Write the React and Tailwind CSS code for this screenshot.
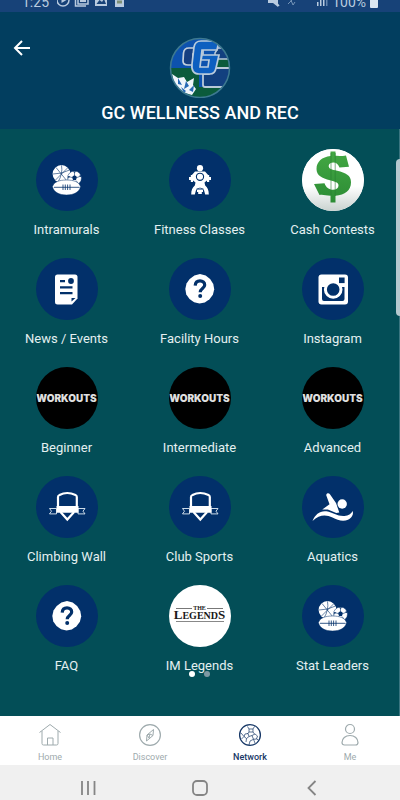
import React from "react";

function BallsIcon() {
  return (
    <svg viewBox="0 0 62 62" className="size-full" aria-hidden="true">
      <circle cx="25.5" cy="25" r="8.9" fill="#fff" />
      <circle cx="38.5" cy="29" r="7" fill="#fff" stroke="#02306a" strokeWidth="0.5" />
      <g fill="none" stroke="#02306a" strokeWidth="0.6">
        <path d="M20 18.500L31 32M32 18.500L19 31.500M25.500 16.300Q27 25 22 33M17 25Q26 25 33.500 21" />
        <path d="M38.500 26V22.500M36 28.500L32.500 27.500M41 28.500L45 27M37 31.500L35.500 34M40 31.500L42 34" />
      </g>
      <path d="M38.500 26l2.500 2-1 3h-3l-1-3zM36.500 22.400h4l-2 1.400zM44 25l1.300 3-1.800-.5zM32 27l2 .6-1.500 2.200z" fill="#02306a" />
      <path d="M16.500 37.500C18 33 23 31 30.500 31S43 33 44.500 37.500C43.500 43 38 46 30.500 46S17.500 43 16.500 37.500z" fill="#fff" stroke="#02306a" strokeWidth="0.5" />
      <path d="M18 38.300H43.500M27 35.500v5.500M29.300 35.500v5.500M31.600 35.500v5.500M34 35.500v5.500" stroke="#02306a" strokeWidth="0.8" fill="none" />
    </svg>
  );
}

function FitnessIcon() {
  return (
    <svg viewBox="0 0 62 62" className="size-full" aria-hidden="true" fill="#fff">
      <circle cx="31" cy="19.200" r="3.100" />
      <path d="M26 22.500h10l4 4.500-1.500 4-3 2.500 1 4.500h-11l1-4.500-3-2.500L22 27z" />
      <path d="M22 28.500h18v2H22zM21.800 26h2.200v7h-2.200zM38 26h2.200v7H38zM20 28h1.800v3H20zM40.200 28H42v3h-1.800z" />
      <circle cx="31" cy="27.800" r="3.600" stroke="#02306a" strokeWidth="1.100" />
      <path d="M26 36.500h10c2.500 1.500 3.800 4.500 3.800 9h-3.600l-1.400-5h-7.600l-1.400 5h-3.600c0-4.500 1.300-7.500 3.800-9z" />
      <path d="M27.500 40q3.500-1.800 7 0" stroke="#02306a" fill="none" strokeWidth="0.8" />
      <path d="M28 41h6v2h-6zM29.200 43h3.600v2h-3.600z" />
    </svg>
  );
}

function DollarIcon() {
  return (
    <svg viewBox="0 0 62 62" className="size-full" aria-hidden="true">
      <defs>
        <linearGradient id="cash" x1="0" y1="0" x2="0" y2="1">
          <stop offset="0" stopColor="#43a843" />
          <stop offset="1" stopColor="#2c8c35" />
        </linearGradient>
        <linearGradient id="floor" x1="0" y1="0" x2="0" y2="1">
          <stop offset="0.6" stopColor="#fff" />
          <stop offset="1" stopColor="#c9d2cf" />
        </linearGradient>
      </defs>
      <circle cx="31" cy="31" r="31" fill="url(#floor)" />
      <path d="M28.500 2.500h5v4.300c4.500-.1 8 .8 10.500-.2l3 11.200-9.500.6c-1.500-3.300-3.200-5-6-5-3 0-4.800 1.200-4.800 3.500 0 3 3 3.400 8.500 4.800 8.500 2.200 13.800 4.500 13.800 11.500 0 8.200-6 12.800-15.500 13.500v6.800h-5v-6.700c-5-.3-8-1.800-11-.8L12 35l10.500-.8c1.500 4.200 4.500 6.500 8.500 6.500 3.500 0 5.500-1.700 5.500-4.200 0-3.200-3.500-3.800-8.500-5.200-8-2.200-13.500-4.500-13.500-11.300 0-7.200 5.500-12 14-12.900z" fill="url(#cash)" />
      <path d="M29 4v42M33.200 4v43" stroke="#267c30" strokeWidth="0.6" />
    </svg>
  );
}

function NewsIcon() {
  return (
    <svg viewBox="0 0 62 62" className="size-full" aria-hidden="true">
      <path d="M21.500 16.500h17.500a2.500 2.500 0 0 1 2.500 2.500v21.500l-5.500 6H21.500A2.500 2.500 0 0 1 19 44V19a2.500 2.500 0 0 1 2.500-2.500z" fill="#fff" />
      <path d="M24 22h5v2.200h-5zM24 28.200h12.500v2.200H24zM24 34h12.500v2.200H24zM35.500 40h4l-4 3.500z" fill="#02306a" />
      <circle cx="35" cy="23" r="2.900" fill="#02306a" />
    </svg>
  );
}

function QuestionIcon() {
  return (
    <svg viewBox="0 0 62 62" className="size-full" aria-hidden="true">
      <path d="M31 16l5.700 1.600 4.400 3.500 3.200 4.800.9 5.300-1.300 5.500-3.400 4.600-4.700 3.200-5.300 1-5.400-1.200-4.600-3.300-3.200-4.500-1-5.400 1.200-5.500 3.200-4.700 4.700-3.300z" fill="#fff" />
      <path d="M26.200 27.600c.2-3 2-4.700 4.800-4.700s4.700 1.600 4.700 4.100c0 3.400-4.500 3.700-4.500 7.200" fill="none" stroke="#02306a" strokeWidth="3.200" />
      <circle cx="31.200" cy="38" r="2" fill="#02306a" />
    </svg>
  );
}

function CameraIcon() {
  return (
    <svg viewBox="0 0 62 62" className="size-full" aria-hidden="true">
      <rect x="16.500" y="16.500" width="29.500" height="30" rx="3" fill="#fff" />
      <path d="M20 29h3.500a8.300 8.300 0 1 0 15.700 0h3.300v12a2 2 0 0 1-2 2H22a2 2 0 0 1-2-2z" fill="#02306a" />
      <circle cx="31.200" cy="31.500" r="7.800" fill="#02306a" stroke="#fff" strokeWidth="3" />
      <rect x="37" y="19.500" width="5.600" height="5.600" fill="#02306a" />
    </svg>
  );
}

function ShieldIcon() {
  return (
    <svg viewBox="0 0 62 62" className="size-full" aria-hidden="true">
      <path d="M22 31V21q0-1.500 1.500-2Q31 15 39.500 19q1.300.5 1.300 2V31M24.500 36l6.800 7.500 6.800-7.500" fill="none" stroke="#fff" strokeWidth="2.200" />
      <path d="M20.500 32.500h-7l2 2.700-2 2.700h7zM42 32.500h7l-2 2.700 2 2.700h-7z" fill="#02306a" stroke="#e2edf5" strokeWidth="0.9" />
      <path d="M20.500 30h22v6.800h-22z" fill="#fff" />
    </svg>
  );
}

function SwimIcon() {
  return (
    <svg viewBox="0 0 62 62" className="size-full" aria-hidden="true" fill="#fff">
      <path d="M24.500 20q-.8-2 1-2.700 1.600-.3 2.600 1.300l5.900 8.400 3.300 9.500-3 .5-8.500-3.500h-5.500l7.200-5.300z" />
      <circle cx="40.200" cy="28" r="4.700" />
      <path d="M10.500 45c3-7 7.500-10.500 14-9.700 6.500 1 11 5.300 18 4.700 4-.3 6.500-2 8.200-5 1 3-.7 7-4.700 8.800-5 2-10.500.5-15.500-2.300-6-3-13-3.500-20 3.500z" />
    </svg>
  );
}

function WorkoutsBadge() {
  return (
    <span className="font-['Inter',sans-serif] text-[10px] font-black leading-4 text-[#dedede]" aria-hidden="true">
      WORKOUTS
    </span>
  );
}

function LegendsBadge() {
  return (
    <span className="flex flex-col items-center pb-1 font-['Liberation_Serif',serif] font-bold text-[#181818]" aria-hidden="true">
      <span className="flex items-center gap-px">
        <i className="h-px w-4 bg-[#777]" />
        <span className="text-[6px] leading-[5px]">THE</span>
        <i className="h-px w-4 bg-[#777]" />
      </span>
      <span className="text-[10px] leading-2">
        <span className="text-[13px]">L</span>EGEND<span className="text-[13px]">S</span>
      </span>
      <i className="mt-px h-px w-12 bg-[#888]" />
    </span>
  );
}

const items = [
  ["Intramurals", BallsIcon, "bg-[#02306a]"],
  ["Fitness Classes", FitnessIcon, "bg-[#02306a]"],
  ["Cash Contests", DollarIcon, "bg-white"],
  ["News / Events", NewsIcon, "bg-[#02306a]"],
  ["Facility Hours", QuestionIcon, "bg-[#02306a]"],
  ["Instagram", CameraIcon, "bg-[#02306a]"],
  ["Beginner", WorkoutsBadge, "bg-black"],
  ["Intermediate", WorkoutsBadge, "bg-black"],
  ["Advanced", WorkoutsBadge, "bg-black"],
  ["Climbing Wall", ShieldIcon, "bg-[#02306a]"],
  ["Club Sports", ShieldIcon, "bg-[#02306a]"],
  ["Aquatics", SwimIcon, "bg-[#02306a]"],
  ["FAQ", QuestionIcon, "bg-[#02306a]"],
  ["IM Legends", LegendsBadge, "bg-white"],
  ["Stat Leaders", BallsIcon, "bg-[#02306a]"],
];

function Logo() {
  return (
    <svg viewBox="0 0 62 62" className="size-[62px]" role="img" aria-label="GC">
      <defs>
        <clipPath id="logoClip"><circle cx="31" cy="32" r="29.500" /></clipPath>
      </defs>
      <g clipPath="url(#logoClip)">
        <rect width="62" height="62" fill="#0d52ae" />
        <path d="M0 32h30v30H0zM44 23h18v10H44zM28 51h34v11H28z" fill="#0b5b3c" />
        <path d="M46 23V17l3-5h9l4 11z" fill="#12407f" stroke="#b9c9d8" strokeWidth="1.500" />
        <path d="M62 32H47q-4 0-5 4l-2 2h-6v11q0 2 2 2h26z" fill="#12407f" stroke="#b9c9d8" strokeWidth="1.800" />
        <path d="M34 12H20q-5 0-5.500 5L14 25q0 4 5 4h11v-5h-6v-6h10z" fill="#163f80" stroke="#c3d0dc" strokeWidth="1.700" />
        <path d="M50 5H32q-6 0-7 6l-2 17q-1 10 7 10h11q5 0 6-6l3-13H33l-1 5h8l-1 7h-8l2-17h15z" fill="#0d5fc0" stroke="#b9cbdc" strokeWidth="1.700" />
        <path d="M3 38l6 4 6-1 3 5 7-4-1 7 3 4-4 6-7-2-7-4-4-7z" fill="#f0f5fb" />
        <path d="M9 42l4 7-4-1zM17 45l3 5-5 3zM20 54l5-5-1 7zM12 51l5 4-2 2z" fill="#2769b5" />
      </g>
      <circle cx="31" cy="32" r="29.500" fill="none" stroke="#3d7990" strokeWidth="1.500" />
    </svg>
  );
}

function HomeIcon() {
  return (
    <svg viewBox="0 0 24 24" className="size-6" fill="none" stroke="currentColor" strokeWidth="1" aria-hidden="true">
      <path d="M1.500 9.500L12 1.500l10.500 8M4 8v12.500q0 1.500 1.500 1.500h13q1.500 0 1.500-1.500V8M9.500 22v-7h5.500v7" />
    </svg>
  );
}

function CompassIcon() {
  return (
    <svg viewBox="0 0 24 24" className="size-6" fill="none" stroke="currentColor" strokeWidth="1" aria-hidden="true">
      <circle cx="12" cy="12" r="10.400" strokeWidth="1.200" />
      <path d="M15.500 6.500l-.5 6-6.500 5.500.5-6zM9 12l3-1 3 1.500M12 11l-1 4M11 15l-2-3" />
    </svg>
  );
}

function NetworkIcon() {
  return (
    <svg viewBox="0 0 24 24" className="size-6" fill="none" stroke="currentColor" strokeWidth="0.700" aria-hidden="true">
      <circle cx="12" cy="12" r="10.400" strokeWidth="1.300" />
      <path d="M11 6h4v3h-4zM9.500 3.500L11 6M16.500 3.500L15 6M11 9L9.500 11M15 9l1.500 2M7 11l3-.5 1 3-2.500 2L6 13.500zM3 10l3 3.500M3.500 16L6 13.500M8.500 15.500L8 19M11 13.500l3-1M14 12.500l3-1.500 2.500 2-1 3-3 .3zM18.500 16l2 1M15.500 16.300L12 18l-1 4M15.500 16.300L17 20" />
    </svg>
  );
}

function PersonIcon() {
  return (
    <svg viewBox="0 0 24 24" className="size-6" fill="none" stroke="currentColor" strokeWidth="1.200" aria-hidden="true">
      <circle cx="12" cy="6" r="4.500" />
      <path d="M4 19.500c0-4 3.300-7 8-7s8 3 8 7q0 2.500-2.500 2.500h-11Q4 22 4 19.500z" />
    </svg>
  );
}

const tabs = [
  ["Home", HomeIcon, "text-[#9eaaad]"],
  ["Discover", CompassIcon, "text-[#9eaaad]"],
  ["Network", NetworkIcon, "text-[#163766] font-medium"],
  ["Me", PersonIcon, "text-[#9eaaad]"],
];

function StatusBar() {
  return (
    <div className="flex h-3 items-end justify-between overflow-hidden bg-[#174278] px-[22px] pb-1 text-[#b9cbdf]">
      <div className="flex items-end gap-2">
        <span className="text-sm leading-3">1:25</span>
        <svg viewBox="0 0 68 14" className="h-3.5 w-17" fill="none" stroke="currentColor" aria-hidden="true">
          <circle cx="6" cy="6" r="6" strokeWidth="1.500" />
          <path d="M4.500 3v6l5-3z" fill="currentColor" stroke="none" />
          <path d="M18.500 2v10H29M21 1h10v9H21z" strokeWidth="1.500" />
          <path d="M23 3h6v5h-6z" fill="currentColor" stroke="none" />
          <path d="M38 1h12v11H38z" fill="currentColor" stroke="none" />
          <path d="M39.500 10l3-4 2.500 2 2-3 2 5z" fill="#174278" stroke="none" />
          <path d="M58 0h9v13h-9z" fill="currentColor" stroke="none" />
          <path d="M60 6.500h5v3h-5z" fill="#7d8f75" stroke="none" />
        </svg>
      </div>
      <div className="flex items-end gap-1">
        <svg viewBox="0 0 60 14" className="h-3.5 w-15" fill="currentColor" aria-hidden="true">
          <path d="M0 3h5l5-4v14l-5-4H0z" />
          <path d="M1 0l10 12" stroke="currentColor" strokeWidth="1.500" />
          <path d="M20 10l5-5M22 4l3 7 2-3" stroke="#7594b7" fill="none" />
          <path d="M35 5h10v1H35zM49 8h1.500v4H49zM52 5h1.500v7H52zM55 2h1.500v10H55z" />
          <path d="M58 0h1.500v12H58z" fill="#6586ae" />
        </svg>
        <span className="text-sm leading-3">100%</span>
        <i className="h-3 w-2 rounded-[1px] bg-[#dce7f0]" />
      </div>
    </div>
  );
}

export default function App() {
  return (
    <div className="relative flex min-h-screen flex-col bg-[#034e57] font-['Roboto',sans-serif]">
      <StatusBar />
      <header className="grid grid-cols-[1fr_auto_1fr] bg-[#023e5f] px-3 pt-6 pb-1">
        <button type="button" aria-label="Back" className="flex size-6 items-center text-white">
          <svg viewBox="0 0 20 20" className="size-5" fill="none" stroke="currentColor" strokeWidth="2" aria-hidden="true">
            <path d="M18 10H4M10 3L3 10l7 7" />
          </svg>
        </button>
        <Logo />
        <h1 className="col-span-3 pt-[3px] pb-px text-center text-lg font-medium leading-[23px] text-white">GC WELLNESS AND REC</h1>
      </header>

      <main className="flex-1 border-r border-[#3a7580] pt-5 pb-9">
        <div className="grid grid-cols-3 gap-y-[17px]">
          {items.map(([label, Icon, bg]) => (
            <a key={label} href="#" className="flex flex-col items-center gap-2">
              <span className={`flex size-[62px] items-center justify-center overflow-hidden rounded-full ${bg}`}>
                <Icon />
              </span>
              <span className="text-[13px] leading-[22px] text-[#e4f0f1]">{label}</span>
            </a>
          ))}
        </div>
        <div className="relative -mt-[5px] flex h-1 items-center justify-center gap-[9px]">
          <i className="size-1.5 rounded-full bg-white" />
          <i className="size-1.5 rounded-full bg-[#7d98a3]" />
        </div>
      </main>

      <i className="absolute top-[159px] right-0 h-[157px] w-1 rounded-l bg-[#b5c9cf]" />

      <nav className="grid h-[49px] grid-cols-4 bg-white">
        {tabs.map(([label, Icon, tone]) => (
          <button key={label} type="button" className={`flex flex-col items-center pt-[7px] ${tone}`}>
            <Icon />
            <span className="pt-1 text-[9px] leading-3">{label}</span>
          </button>
        ))}
      </nav>

      <div className="flex h-[35px] justify-around bg-[#f0f0f0] px-8 pt-[11px] text-[#858585]">
        <button type="button" aria-label="Recent apps" className="flex size-6 justify-center">
          <svg viewBox="0 0 24 24" className="size-6" fill="none" stroke="currentColor" strokeWidth="1.800" aria-hidden="true"><path d="M6 5v14M12 5v14M18.500 5v14" /></svg>
        </button>
        <button type="button" aria-label="Home screen" className="flex size-6 justify-center">
          <svg viewBox="0 0 24 24" className="size-6" fill="none" stroke="currentColor" strokeWidth="1.800" aria-hidden="true"><rect x="5" y="5" width="14" height="14" rx="4" /></svg>
        </button>
        <button type="button" aria-label="Go back" className="flex size-6 justify-center">
          <svg viewBox="0 0 24 24" className="size-6" fill="none" stroke="currentColor" strokeWidth="1.800" aria-hidden="true"><path d="M15.500 5l-7 7 7 7" /></svg>
        </button>
      </div>
    </div>
  );
}
